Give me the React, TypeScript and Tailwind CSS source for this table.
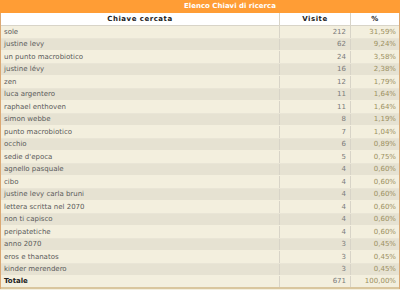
const rows: [string, number, string][] = [
  ['sole', 212, '31,59%'],
  ['justine levy', 62, '9,24%'],
  ['un punto macrobiotico', 24, '3,58%'],
  ['justine lévy', 16, '2,38%'],
  ['zen', 12, '1,79%'],
  ['luca argentero', 11, '1,64%'],
  ['raphael enthoven', 11, '1,64%'],
  ['simon webbe', 8, '1,19%'],
  ['punto macrobiotico', 7, '1,04%'],
  ['occhio', 6, '0,89%'],
  ["sedie d'epoca", 5, '0,75%'],
  ['agnello pasquale', 4, '0,60%'],
  ['cibo', 4, '0,60%'],
  ['justine levy carla bruni', 4, '0,60%'],
  ['lettera scritta nel 2070', 4, '0,60%'],
  ['non ti capisco', 4, '0,60%'],
  ['peripatetiche', 4, '0,60%'],
  ['anno 2070', 3, '0,45%'],
  ['eros e thanatos', 3, '0,45%'],
  ['kinder merendero', 3, '0,45%'],
]

const App = () => {
  return (
    <div className="h-[290px] w-[400px] overflow-hidden bg-[#f3efde] font-['DejaVu_Sans',sans-serif] text-[7px]">
      <div className="flex h-[13px] items-center justify-center bg-[#ff9d35] pl-[60px] font-bold text-white">
        Elenco Chiavi di ricerca
      </div>
      <div className="border-x border-[#dba873]">
        <div className="grid h-[13px] grid-cols-[279px_71px_1fr] border-b border-[#d8d4c8] bg-white font-bold tracking-[0.5px] text-[#222]">
          <div className="flex items-center justify-center border-r border-[#d8d4c8]">Chiave cercata</div>
          <div className="flex items-center justify-center border-r border-[#d8d4c8]">Visite</div>
          <div className="flex items-center justify-center">%</div>
        </div>
        {rows.map(([key, visits, pct], i) => (
          <div
            key={key}
            className={
              i % 2 === 0
                ? 'grid h-[12.5px] grid-cols-[279px_71px_1fr] border-b border-[#e9e5d6] bg-[#f3efde]'
                : 'grid h-[12.5px] grid-cols-[279px_71px_1fr] border-b border-[#f3efde] bg-[#e6e2d2]'
            }
          >
            <div className="flex items-center border-r border-[#d8d4c8] pl-[3px] text-[#5a5a5a]">{key}</div>
            <div className="flex items-center justify-end border-r border-[#d8d4c8] pr-[4px] text-[#7a7a7a]">{visits}</div>
            <div className="flex items-center justify-end pr-[3px] text-[#9c9060]">{pct}</div>
          </div>
        ))}
        <div className="grid h-[12.5px] grid-cols-[279px_71px_1fr] border-b-2 border-[#d9c69e] bg-[#f3efde]">
          <div className="flex items-center border-r border-[#d8d4c8] pl-[3px] font-bold text-[#222]">Totale</div>
          <div className="flex items-center justify-end border-r border-[#d8d4c8] pr-[4px] text-[#7a7a7a]">671</div>
          <div className="flex items-center justify-end pr-[3px] text-[#9c9060]">100,00%</div>
        </div>
      </div>
    </div>
  )
}

export default App
